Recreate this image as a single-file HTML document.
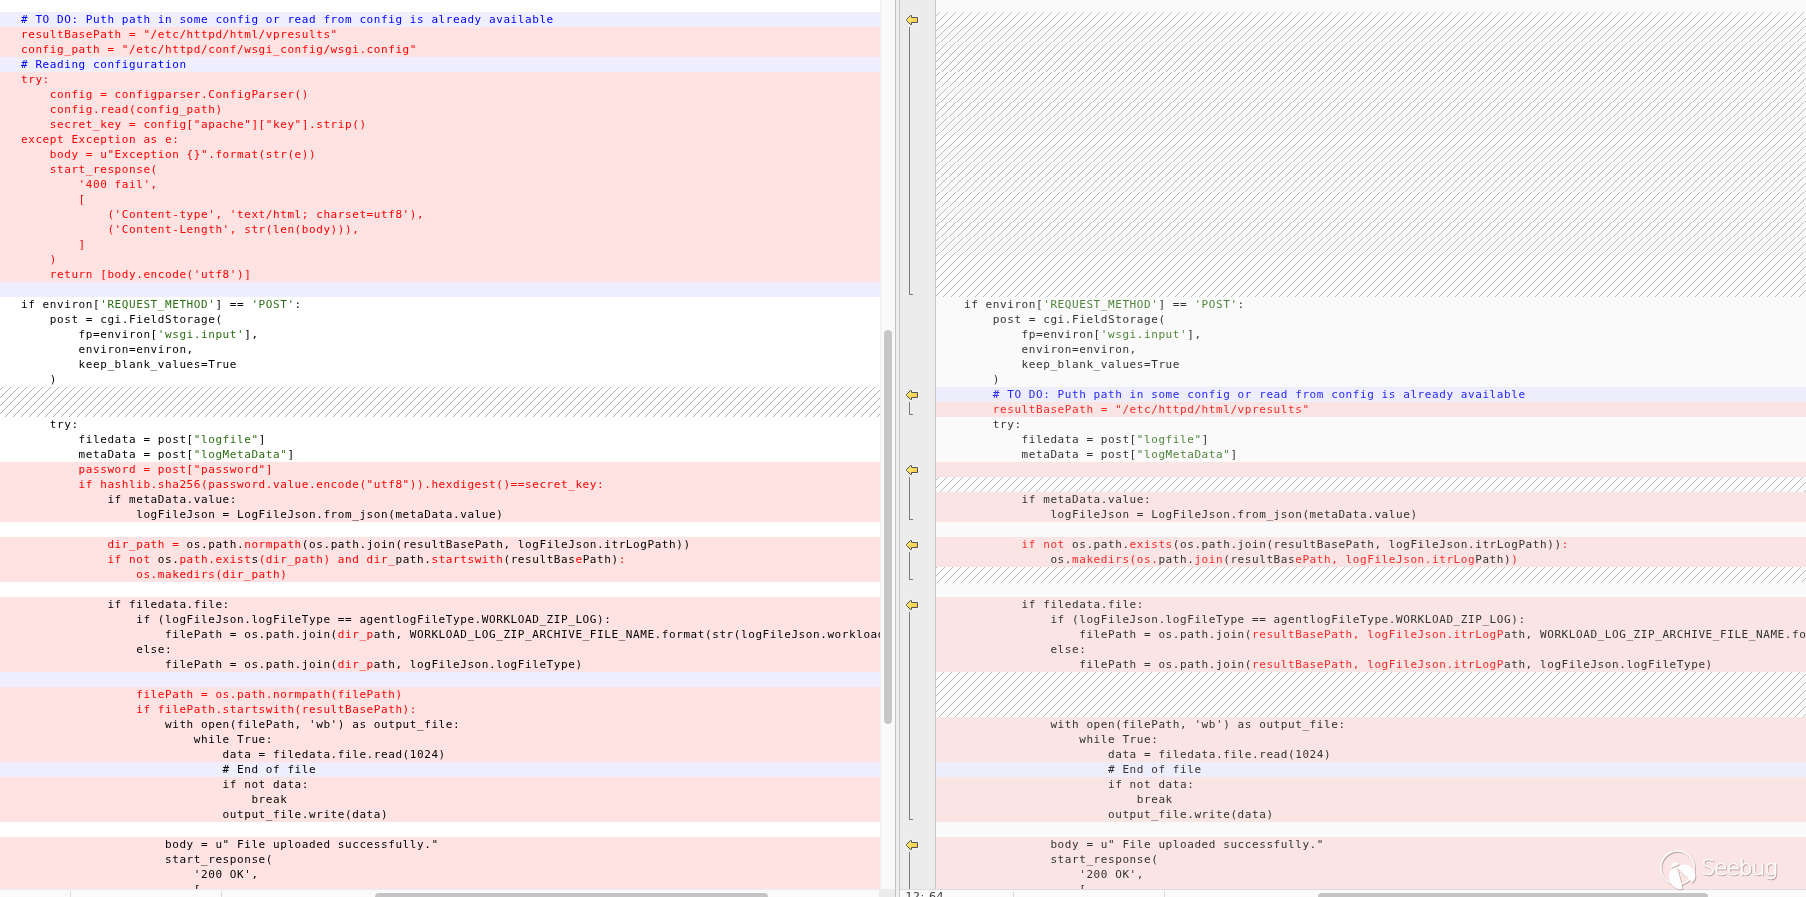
<!DOCTYPE html>
<html lang="en"><head><meta charset="utf-8"><title>diff</title>
<style>
*{box-sizing:border-box}
html,body{margin:0;padding:0}
body{width:1806px;height:897px;overflow:hidden;background:#fff;position:relative;
 font-family:"DejaVu Sans Mono","Liberation Mono",monospace;font-size:11px;letter-spacing:0.5774px;line-height:15px;color:#000}
.pane{position:absolute;top:0;height:889px;overflow:hidden;will-change:transform}
#lp{left:0;width:880px;background:#fff}
#rp{left:936px;width:870px;background:#fafafa}
.hatchsvg{position:absolute;left:0;top:0}
.row{position:absolute;left:0;width:100%;height:15px;white-space:pre;overflow:hidden}
#lp .row{padding-left:21px}
#rp .row{padding-left:28px}
#lp .R{background:#ffe3e3}
#lp .B{background:#eeeeff}
#rp .R{background:#fae4e4}
#rp .B{background:#ededfb}
.H{background:transparent}
#lp .k{color:#000}
#lp .r{color:#ff0000}
#lp .b{color:#0000ff}
#lp .g{color:#2a6e12}
#rp .k{color:#333333}
#rp .r{color:#fb2a2a}
#rp .b{color:#2828fb}
#rp .g{color:#50863c}
#vs{position:absolute;left:880px;top:0;width:15px;height:889px;background:linear-gradient(to right,#eeeeee 0,#f4f4f4 1px,#fafafa 2.5px,#fafafa 12px,#f7f7f7 15px)}
#vs i{position:absolute;left:4px;top:330px;width:8px;height:394px;border-radius:4px;background:#c7c7c7}
#dv{position:absolute;left:895px;top:0;width:5px;height:897px;background:#f0f0f0;border-left:1px solid #c3c3c3;border-right:1px solid #c3c3c3}
#gt{position:absolute;left:900px;top:0;width:36px;height:889px;background:#ececec;border-right:1px solid #c6c6c6}
.arrow{position:absolute;left:904px}
.vl{position:absolute;left:909px;width:1px;background:#7c7c7c}
.hk{position:absolute;left:909px;width:4px;height:1px;background:#7c7c7c}
#bl{position:absolute;left:0;top:889px;width:880px;height:8px;background:#fafafa;border-top:1px solid #ededed}
#br{position:absolute;left:900px;top:889px;width:906px;height:8px;background:#fafafa;border-top:1px solid #dcdcdc;overflow:hidden;will-change:transform}
#cn{position:absolute;left:879px;top:889px;width:16px;height:8px;background:#ececec}
.tk{position:absolute;top:1px;width:1px;height:6px;background:#dcdcdc}
.th{position:absolute;top:3px;height:8px;border-radius:4px;background:#c4c4c4}
#st{position:absolute;left:5.4px;top:-1px;font-family:"DejaVu Sans","Liberation Sans",sans-serif;font-size:11px;line-height:15px;color:#3a3a3a;white-space:pre}
#wm{position:absolute;left:1655px;top:845px}
</style></head>
<body>
<svg width="0" height="0" style="position:absolute"><defs>
<linearGradient id="ag" x1="0" y1="0" x2="1" y2="1"><stop offset="0" stop-color="#fff27a"/><stop offset=".55" stop-color="#fbd95a"/><stop offset="1" stop-color="#f6c232"/></linearGradient>
</defs></svg>
<div class="pane" id="lp">
<svg class="hatchsvg" width="880" height="889" shape-rendering="crispEdges"><defs><pattern id="hl5" x="0" y="0" width="8" height="8" patternUnits="userSpaceOnUse"><rect width="8" height="8" fill="#ffffff"/><g fill="#b0b0b0"><rect x="5" y="0" width="1" height="1"/><rect x="4" y="1" width="1" height="1"/><rect x="3" y="2" width="1" height="1"/><rect x="2" y="3" width="1" height="1"/><rect x="1" y="4" width="1" height="1"/><rect x="0" y="5" width="1" height="1"/><rect x="7" y="6" width="1" height="1"/><rect x="6" y="7" width="1" height="1"/></g></pattern></defs><rect x="0" y="387" width="880" height="30" fill="url(#hl5)"/></svg>
<div class="row B" style="top:12px"><span class="b"># TO DO: Puth path in some config or read from config is already available</span></div>
<div class="row R" style="top:27px"><span class="r">resultBasePath = "/etc/httpd/html/vpresults"</span></div>
<div class="row R" style="top:42px"><span class="r">config_path = "/etc/httpd/conf/wsgi_config/wsgi.config"</span></div>
<div class="row B" style="top:57px"><span class="b"># Reading configuration</span></div>
<div class="row R" style="top:72px"><span class="r">try:</span></div>
<div class="row R" style="top:87px"><span class="r">    config = configparser.ConfigParser()</span></div>
<div class="row R" style="top:102px"><span class="r">    config.read(config_path)</span></div>
<div class="row R" style="top:117px"><span class="r">    secret_key = config["apache"]["key"].strip()</span></div>
<div class="row R" style="top:132px"><span class="r">except Exception as e:</span></div>
<div class="row R" style="top:147px"><span class="r">    body = u"Exception {}".format(str(e))</span></div>
<div class="row R" style="top:162px"><span class="r">    start_response(</span></div>
<div class="row R" style="top:177px"><span class="r">        '400 fail',</span></div>
<div class="row R" style="top:192px"><span class="r">        [</span></div>
<div class="row R" style="top:207px"><span class="r">            ('Content-type', 'text/html; charset=utf8'),</span></div>
<div class="row R" style="top:222px"><span class="r">            ('Content-Length', str(len(body))),</span></div>
<div class="row R" style="top:237px"><span class="r">        ]</span></div>
<div class="row R" style="top:252px"><span class="r">    )</span></div>
<div class="row R" style="top:267px"><span class="r">    return [body.encode('utf8')]</span></div>
<div class="row B" style="top:282px"></div>
<div class="row" style="top:297px"><span class="k">if environ[</span><span class="g">'REQUEST_METHOD'</span><span class="k">] == </span><span class="g">'POST'</span><span class="k">:</span></div>
<div class="row" style="top:312px"><span class="k">    post = cgi.FieldStorage(</span></div>
<div class="row" style="top:327px"><span class="k">        fp=environ[</span><span class="g">'wsgi.input'</span><span class="k">],</span></div>
<div class="row" style="top:342px"><span class="k">        environ=environ,</span></div>
<div class="row" style="top:357px"><span class="k">        keep_blank_values=True</span></div>
<div class="row" style="top:372px"><span class="k">    )</span></div>
<div class="row H" style="top:387px"></div>
<div class="row H" style="top:402px"></div>
<div class="row" style="top:417px"><span class="k">    try:</span></div>
<div class="row" style="top:432px"><span class="k">        filedata = post[</span><span class="g">"logfile"</span><span class="k">]</span></div>
<div class="row" style="top:447px"><span class="k">        metaData = post[</span><span class="g">"logMetaData"</span><span class="k">]</span></div>
<div class="row R" style="top:462px"><span class="r">        password = post["password"]</span></div>
<div class="row R" style="top:477px"><span class="r">        if hashlib.sha256(password.value.encode("utf8")).hexdigest()==secret_key:</span></div>
<div class="row R" style="top:492px"><span class="k">            if metaData.value:</span></div>
<div class="row R" style="top:507px"><span class="k">                logFileJson = LogFileJson.from_json(metaData.value)</span></div>
<div class="row" style="top:522px"></div>
<div class="row R" style="top:537px"><span class="r">            dir_path = </span><span class="k">os.path.</span><span class="r">normpath</span><span class="k">(os.path.join(resultBasePath, logFileJson.itrLogPath))</span></div>
<div class="row R" style="top:552px"><span class="r">            if not </span><span class="k">os.</span><span class="r">path.exist</span><span class="k">s</span><span class="r">(dir_path) and dir_</span><span class="k">path.</span><span class="r">startswith</span><span class="k">(resultBas</span><span class="r">e</span><span class="k">Path)</span><span class="r">:</span></div>
<div class="row R" style="top:567px"><span class="r">                os.makedirs(dir_path)</span></div>
<div class="row" style="top:582px"></div>
<div class="row R" style="top:597px"><span class="k">            if filedata.file:</span></div>
<div class="row R" style="top:612px"><span class="k">                if (logFileJson.logFileType == agentlogFileType.WORKLOAD_ZIP_LOG):</span></div>
<div class="row R" style="top:627px"><span class="k">                    filePath = os.path.join(</span><span class="r">dir_p</span><span class="k">ath, WORKLOAD_LOG_ZIP_ARCHIVE_FILE_NAME.format(str(logFileJson.workloadID)))</span></div>
<div class="row R" style="top:642px"><span class="k">                else:</span></div>
<div class="row R" style="top:657px"><span class="k">                    filePath = os.path.join(</span><span class="r">dir_p</span><span class="k">ath, logFileJson.logFileType)</span></div>
<div class="row B" style="top:672px"></div>
<div class="row R" style="top:687px"><span class="r">                filePath = os.path.normpath(filePath)</span></div>
<div class="row R" style="top:702px"><span class="r">                if filePath.startswith(resultBasePath):</span></div>
<div class="row R" style="top:717px"><span class="k">                    with open(filePath, 'wb') as output_file:</span></div>
<div class="row R" style="top:732px"><span class="k">                        while True:</span></div>
<div class="row R" style="top:747px"><span class="k">                            data = filedata.file.read(1024)</span></div>
<div class="row B" style="top:762px"><span class="k">                            # End of file</span></div>
<div class="row R" style="top:777px"><span class="k">                            if not data</span><span class="k">:</span></div>
<div class="row R" style="top:792px"><span class="k">                                break</span></div>
<div class="row R" style="top:807px"><span class="k">                            output_file.write(data)</span></div>
<div class="row" style="top:822px"></div>
<div class="row R" style="top:837px"><span class="k">                    body = u" File uploaded successfully."</span></div>
<div class="row R" style="top:852px"><span class="k">                    start_response(</span></div>
<div class="row R" style="top:867px"><span class="k">                        '200 OK',</span></div>
<div class="row R" style="top:882px"><span class="k">                        [</span></div>
</div>
<div id="vs"><i></i></div>
<div id="dv"></div>
<div id="gt"></div>
<svg class="arrow" style="top:13px" width="16" height="14" viewBox="0 0 16 14"><path d="M2.5 6.5 L6.5 2.5 H7.5 V4.5 H13.5 V9.5 H7.5 V11.5 H6.5 L2.5 7.5 Z" fill="none" stroke="#ffffff" stroke-opacity=".3" stroke-width="3" stroke-linejoin="round"/><path d="M2.5 6.5 L6.5 2.5 H7.5 V4.5 H13.5 V9.5 H7.5 V11.5 H6.5 L2.5 7.5 Z" fill="url(#ag)" stroke="#4f535e" stroke-width="1" stroke-linejoin="miter"/></svg>
<div class="vl" style="top:27px;height:268px"></div>
<div class="hk" style="top:294px"></div>
<svg class="arrow" style="top:388px" width="16" height="14" viewBox="0 0 16 14"><path d="M2.5 6.5 L6.5 2.5 H7.5 V4.5 H13.5 V9.5 H7.5 V11.5 H6.5 L2.5 7.5 Z" fill="none" stroke="#ffffff" stroke-opacity=".3" stroke-width="3" stroke-linejoin="round"/><path d="M2.5 6.5 L6.5 2.5 H7.5 V4.5 H13.5 V9.5 H7.5 V11.5 H6.5 L2.5 7.5 Z" fill="url(#ag)" stroke="#4f535e" stroke-width="1" stroke-linejoin="miter"/></svg>
<div class="vl" style="top:402px;height:13px"></div>
<div class="hk" style="top:414px"></div>
<svg class="arrow" style="top:463px" width="16" height="14" viewBox="0 0 16 14"><path d="M2.5 6.5 L6.5 2.5 H7.5 V4.5 H13.5 V9.5 H7.5 V11.5 H6.5 L2.5 7.5 Z" fill="none" stroke="#ffffff" stroke-opacity=".3" stroke-width="3" stroke-linejoin="round"/><path d="M2.5 6.5 L6.5 2.5 H7.5 V4.5 H13.5 V9.5 H7.5 V11.5 H6.5 L2.5 7.5 Z" fill="url(#ag)" stroke="#4f535e" stroke-width="1" stroke-linejoin="miter"/></svg>
<div class="vl" style="top:477px;height:43px"></div>
<div class="hk" style="top:519px"></div>
<svg class="arrow" style="top:538px" width="16" height="14" viewBox="0 0 16 14"><path d="M2.5 6.5 L6.5 2.5 H7.5 V4.5 H13.5 V9.5 H7.5 V11.5 H6.5 L2.5 7.5 Z" fill="none" stroke="#ffffff" stroke-opacity=".3" stroke-width="3" stroke-linejoin="round"/><path d="M2.5 6.5 L6.5 2.5 H7.5 V4.5 H13.5 V9.5 H7.5 V11.5 H6.5 L2.5 7.5 Z" fill="url(#ag)" stroke="#4f535e" stroke-width="1" stroke-linejoin="miter"/></svg>
<div class="vl" style="top:552px;height:28px"></div>
<div class="hk" style="top:579px"></div>
<svg class="arrow" style="top:598px" width="16" height="14" viewBox="0 0 16 14"><path d="M2.5 6.5 L6.5 2.5 H7.5 V4.5 H13.5 V9.5 H7.5 V11.5 H6.5 L2.5 7.5 Z" fill="none" stroke="#ffffff" stroke-opacity=".3" stroke-width="3" stroke-linejoin="round"/><path d="M2.5 6.5 L6.5 2.5 H7.5 V4.5 H13.5 V9.5 H7.5 V11.5 H6.5 L2.5 7.5 Z" fill="url(#ag)" stroke="#4f535e" stroke-width="1" stroke-linejoin="miter"/></svg>
<div class="vl" style="top:612px;height:208px"></div>
<div class="hk" style="top:819px"></div>
<svg class="arrow" style="top:838px" width="16" height="14" viewBox="0 0 16 14"><path d="M2.5 6.5 L6.5 2.5 H7.5 V4.5 H13.5 V9.5 H7.5 V11.5 H6.5 L2.5 7.5 Z" fill="none" stroke="#ffffff" stroke-opacity=".3" stroke-width="3" stroke-linejoin="round"/><path d="M2.5 6.5 L6.5 2.5 H7.5 V4.5 H13.5 V9.5 H7.5 V11.5 H6.5 L2.5 7.5 Z" fill="url(#ag)" stroke="#4f535e" stroke-width="1" stroke-linejoin="miter"/></svg>
<div class="vl" style="top:852px;height:37px"></div>
<div class="pane" id="rp">
<svg class="hatchsvg" width="870" height="889" shape-rendering="crispEdges"><defs><pattern id="hr7" x="0" y="0" width="8" height="8" patternUnits="userSpaceOnUse"><rect width="8" height="8" fill="#fafafa"/><g fill="#bababa"><rect x="7" y="0" width="1" height="1"/><rect x="6" y="1" width="1" height="1"/><rect x="5" y="2" width="1" height="1"/><rect x="4" y="3" width="1" height="1"/><rect x="3" y="4" width="1" height="1"/><rect x="2" y="5" width="1" height="1"/><rect x="1" y="6" width="1" height="1"/><rect x="0" y="7" width="1" height="1"/></g></pattern><pattern id="hr6" x="0" y="0" width="8" height="8" patternUnits="userSpaceOnUse"><rect width="8" height="8" fill="#fafafa"/><g fill="#bababa"><rect x="6" y="0" width="1" height="1"/><rect x="5" y="1" width="1" height="1"/><rect x="4" y="2" width="1" height="1"/><rect x="3" y="3" width="1" height="1"/><rect x="2" y="4" width="1" height="1"/><rect x="1" y="5" width="1" height="1"/><rect x="0" y="6" width="1" height="1"/><rect x="7" y="7" width="1" height="1"/></g></pattern><pattern id="hr5" x="0" y="0" width="8" height="8" patternUnits="userSpaceOnUse"><rect width="8" height="8" fill="#fafafa"/><g fill="#bababa"><rect x="5" y="0" width="1" height="1"/><rect x="4" y="1" width="1" height="1"/><rect x="3" y="2" width="1" height="1"/><rect x="2" y="3" width="1" height="1"/><rect x="1" y="4" width="1" height="1"/><rect x="0" y="5" width="1" height="1"/><rect x="7" y="6" width="1" height="1"/><rect x="6" y="7" width="1" height="1"/></g></pattern><pattern id="hr3" x="0" y="0" width="8" height="8" patternUnits="userSpaceOnUse"><rect width="8" height="8" fill="#fafafa"/><g fill="#bababa"><rect x="3" y="0" width="1" height="1"/><rect x="2" y="1" width="1" height="1"/><rect x="1" y="2" width="1" height="1"/><rect x="0" y="3" width="1" height="1"/><rect x="7" y="4" width="1" height="1"/><rect x="6" y="5" width="1" height="1"/><rect x="5" y="6" width="1" height="1"/><rect x="4" y="7" width="1" height="1"/></g></pattern><pattern id="hr2" x="0" y="0" width="8" height="8" patternUnits="userSpaceOnUse"><rect width="8" height="8" fill="#fafafa"/><g fill="#bababa"><rect x="2" y="0" width="1" height="1"/><rect x="1" y="1" width="1" height="1"/><rect x="0" y="2" width="1" height="1"/><rect x="7" y="3" width="1" height="1"/><rect x="6" y="4" width="1" height="1"/><rect x="5" y="5" width="1" height="1"/><rect x="4" y="6" width="1" height="1"/><rect x="3" y="7" width="1" height="1"/></g></pattern><pattern id="hr1" x="0" y="0" width="8" height="8" patternUnits="userSpaceOnUse"><rect width="8" height="8" fill="#fafafa"/><g fill="#bababa"><rect x="1" y="0" width="1" height="1"/><rect x="0" y="1" width="1" height="1"/><rect x="7" y="2" width="1" height="1"/><rect x="6" y="3" width="1" height="1"/><rect x="5" y="4" width="1" height="1"/><rect x="4" y="5" width="1" height="1"/><rect x="3" y="6" width="1" height="1"/><rect x="2" y="7" width="1" height="1"/></g></pattern><pattern id="hr0" x="0" y="0" width="8" height="8" patternUnits="userSpaceOnUse"><rect width="8" height="8" fill="#fafafa"/><g fill="#bababa"><rect x="0" y="0" width="1" height="1"/><rect x="7" y="1" width="1" height="1"/><rect x="6" y="2" width="1" height="1"/><rect x="5" y="3" width="1" height="1"/><rect x="4" y="4" width="1" height="1"/><rect x="3" y="5" width="1" height="1"/><rect x="2" y="6" width="1" height="1"/><rect x="1" y="7" width="1" height="1"/></g></pattern><pattern id="hr4" x="0" y="0" width="8" height="8" patternUnits="userSpaceOnUse"><rect width="8" height="8" fill="#fafafa"/><g fill="#bababa"><rect x="4" y="0" width="1" height="1"/><rect x="3" y="1" width="1" height="1"/><rect x="2" y="2" width="1" height="1"/><rect x="1" y="3" width="1" height="1"/><rect x="0" y="4" width="1" height="1"/><rect x="7" y="5" width="1" height="1"/><rect x="6" y="6" width="1" height="1"/><rect x="5" y="7" width="1" height="1"/></g></pattern></defs><rect x="0" y="12" width="870" height="15" fill="url(#hr7)"/><rect x="0" y="27" width="870" height="15" fill="url(#hr6)"/><rect x="0" y="42" width="870" height="30" fill="url(#hr5)"/><rect x="0" y="72" width="870" height="15" fill="url(#hr3)"/><rect x="0" y="87" width="870" height="15" fill="url(#hr2)"/><rect x="0" y="102" width="870" height="15" fill="url(#hr1)"/><rect x="0" y="117" width="870" height="15" fill="url(#hr0)"/><rect x="0" y="132" width="870" height="15" fill="url(#hr7)"/><rect x="0" y="147" width="870" height="15" fill="url(#hr6)"/><rect x="0" y="162" width="870" height="15" fill="url(#hr5)"/><rect x="0" y="177" width="870" height="15" fill="url(#hr4)"/><rect x="0" y="192" width="870" height="15" fill="url(#hr3)"/><rect x="0" y="207" width="870" height="15" fill="url(#hr2)"/><rect x="0" y="222" width="870" height="15" fill="url(#hr1)"/><rect x="0" y="237" width="870" height="15" fill="url(#hr0)"/><rect x="0" y="252" width="870" height="45" fill="url(#hr7)"/><rect x="0" y="477" width="870" height="15" fill="url(#hr7)"/><rect x="0" y="567" width="870" height="15" fill="url(#hr7)"/><rect x="0" y="672" width="870" height="45" fill="url(#hr7)"/></svg>
<div class="row H" style="top:12px"></div>
<div class="row H" style="top:27px"></div>
<div class="row H" style="top:42px"></div>
<div class="row H" style="top:57px"></div>
<div class="row H" style="top:72px"></div>
<div class="row H" style="top:87px"></div>
<div class="row H" style="top:102px"></div>
<div class="row H" style="top:117px"></div>
<div class="row H" style="top:132px"></div>
<div class="row H" style="top:147px"></div>
<div class="row H" style="top:162px"></div>
<div class="row H" style="top:177px"></div>
<div class="row H" style="top:192px"></div>
<div class="row H" style="top:207px"></div>
<div class="row H" style="top:222px"></div>
<div class="row H" style="top:237px"></div>
<div class="row H" style="top:252px"></div>
<div class="row H" style="top:267px"></div>
<div class="row H" style="top:282px"></div>
<div class="row" style="top:297px"><span class="k">if environ[</span><span class="g">'REQUEST_METHOD'</span><span class="k">] == </span><span class="g">'POST'</span><span class="k">:</span></div>
<div class="row" style="top:312px"><span class="k">    post = cgi.FieldStorage(</span></div>
<div class="row" style="top:327px"><span class="k">        fp=environ[</span><span class="g">'wsgi.input'</span><span class="k">],</span></div>
<div class="row" style="top:342px"><span class="k">        environ=environ,</span></div>
<div class="row" style="top:357px"><span class="k">        keep_blank_values=True</span></div>
<div class="row" style="top:372px"><span class="k">    )</span></div>
<div class="row B" style="top:387px"><span class="b">    # TO DO: Puth path in some config or read from config is already available</span></div>
<div class="row R" style="top:402px"><span class="r">    resultBasePath = "/etc/httpd/html/vpresults"</span></div>
<div class="row" style="top:417px"><span class="k">    try:</span></div>
<div class="row" style="top:432px"><span class="k">        filedata = post[</span><span class="g">"logfile"</span><span class="k">]</span></div>
<div class="row" style="top:447px"><span class="k">        metaData = post[</span><span class="g">"logMetaData"</span><span class="k">]</span></div>
<div class="row R" style="top:462px"></div>
<div class="row H" style="top:477px"></div>
<div class="row R" style="top:492px"><span class="k">        if metaData.value:</span></div>
<div class="row R" style="top:507px"><span class="k">            logFileJson = LogFileJson.from_json(metaData.value)</span></div>
<div class="row" style="top:522px"></div>
<div class="row R" style="top:537px"><span class="r">        if not </span><span class="k">os.path.</span><span class="r">exists</span><span class="k">(os.path.join(resultBasePath, logFileJson.itrLogPath))</span><span class="r">:</span></div>
<div class="row R" style="top:552px"><span class="k">            os.</span><span class="r">makedirs(os.</span><span class="k">path.</span><span class="r">join</span><span class="k">(resultBas</span><span class="r">ePath, logFileJson.itrLog</span><span class="k">Path)</span><span class="r">)</span></div>
<div class="row H" style="top:567px"></div>
<div class="row" style="top:582px"></div>
<div class="row R" style="top:597px"><span class="k">        if filedata.file:</span></div>
<div class="row R" style="top:612px"><span class="k">            if (logFileJson.logFileType == agentlogFileType.WORKLOAD_ZIP_LOG):</span></div>
<div class="row R" style="top:627px"><span class="k">                filePath = os.path.join(</span><span class="r">resultBasePath, logFileJson.itrLogP</span><span class="k">ath, WORKLOAD_LOG_ZIP_ARCHIVE_FILE_NAME.format(str(logFileJson.workloadID)))</span></div>
<div class="row R" style="top:642px"><span class="k">            else:</span></div>
<div class="row R" style="top:657px"><span class="k">                filePath = os.path.join(</span><span class="r">resultBasePath, logFileJson.itrLogP</span><span class="k">ath, logFileJson.logFileType)</span></div>
<div class="row H" style="top:672px"></div>
<div class="row H" style="top:687px"></div>
<div class="row H" style="top:702px"></div>
<div class="row R" style="top:717px"><span class="k">            with open(filePath, 'wb') as output_file:</span></div>
<div class="row R" style="top:732px"><span class="k">                while True:</span></div>
<div class="row R" style="top:747px"><span class="k">                    data = filedata.file.read(1024)</span></div>
<div class="row B" style="top:762px"><span class="k">                    # End of file</span></div>
<div class="row R" style="top:777px"><span class="k">                    if not data</span><span class="k">:</span></div>
<div class="row R" style="top:792px"><span class="k">                        break</span></div>
<div class="row R" style="top:807px"><span class="k">                    output_file.write(data)</span></div>
<div class="row" style="top:822px"></div>
<div class="row R" style="top:837px"><span class="k">            body = u" File uploaded successfully."</span></div>
<div class="row R" style="top:852px"><span class="k">            start_response(</span></div>
<div class="row R" style="top:867px"><span class="k">                '200 OK',</span></div>
<div class="row R" style="top:882px"><span class="k">                [</span></div>
</div>
<div id="bl"><div class="tk" style="left:70px"></div><div class="tk" style="left:221px"></div><div class="th" style="left:375px;width:393px"></div></div>
<div id="cn"></div>
<div id="br"><span id="st">12: 64</span><div class="tk" style="left:113px"></div><div class="tk" style="left:264px"></div><div class="th" style="left:418px;width:390px"></div></div>
<svg id="wm" width="130" height="48" viewBox="0 0 130 48">
<defs><filter id="ws" x="-10%" y="-10%" width="130%" height="130%"><feDropShadow dx="0.7" dy="0.8" stdDeviation="0.45" flood-color="#6e4646" flood-opacity=".6"/></filter></defs>
<g filter="url(#ws)">
<circle cx="22.45" cy="22.7" r="16.7" fill="none" stroke="#fff" stroke-opacity=".95" stroke-width="1.5"/>
<g transform="scale(0.05574)" fill="#fff" fill-opacity=".97">
<path d="M298 434 L392 392 L406 426 L472 700 L492 790 C455 800 420 795 395 783 C340 755 290 700 262 640 C240 585 245 500 298 434Z"/>
<path d="M402 388 L446 366 C500 340 570 345 615 368 C665 395 705 450 720 520 C730 580 715 630 664 676 L612 616 L412 424Z"/>
<path d="M290 412 C285 370 310 325 352 310 L364 292 L374 308 C400 310 428 322 440 346Z"/>
</g>
<text x="46.3" y="30.4" font-family="'DejaVu Sans Light','DejaVu Sans','Liberation Sans',sans-serif" font-weight="200" font-size="21.9" letter-spacing="-1.1" fill="#fff" fill-opacity=".97" stroke="#fff" stroke-width=".45" stroke-opacity=".9">Seebug</text>
</g></svg>
</body></html>
